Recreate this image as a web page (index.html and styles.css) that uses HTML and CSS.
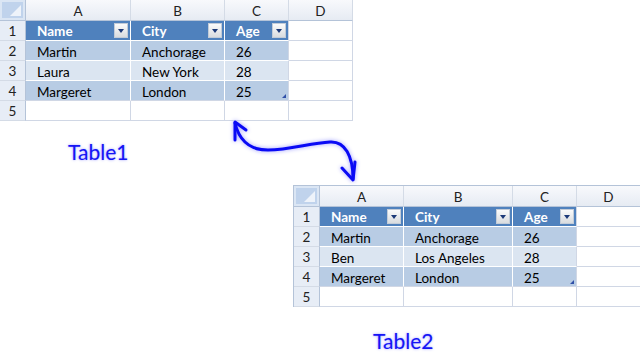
FILE: index.html
```
<!DOCTYPE html>
<html>
<head>
<meta charset="utf-8">
<link rel="stylesheet" href="styles.css">
</head>
<body>
<div class="page">
  <div class="sheet sheet1">
    <div class="corner"></div><div class="colh">A</div><div class="colh">B</div><div class="colh">C</div><div class="colh">D</div>
    <div class="rowh">1</div><div class="th">Name<span class="dd"></span></div><div class="th">City<span class="dd"></span></div><div class="th edge">Age<span class="dd"></span></div><div class="cell"></div>
    <div class="rowh">2</div><div class="td dark">Martin</div><div class="td dark">Anchorage</div><div class="td dark edge">26</div><div class="cell"></div>
    <div class="rowh">3</div><div class="td light">Laura</div><div class="td light">New York</div><div class="td light edge">28</div><div class="cell"></div>
    <div class="rowh">4</div><div class="td dark last">Margeret</div><div class="td dark last">London</div><div class="td dark edge last handle">25</div><div class="cell"></div>
    <div class="rowh">5</div><div class="cell"></div><div class="cell"></div><div class="cell"></div><div class="cell"></div>
  </div>
  <div class="label label1">Table1</div>
  <div class="sheet sheet2">
    <div class="corner"></div><div class="colh">A</div><div class="colh">B</div><div class="colh">C</div><div class="colh">D</div>
    <div class="rowh">1</div><div class="th">Name<span class="dd"></span></div><div class="th">City<span class="dd"></span></div><div class="th edge">Age<span class="dd"></span></div><div class="cell"></div>
    <div class="rowh">2</div><div class="td dark">Martin</div><div class="td dark">Anchorage</div><div class="td dark edge">26</div><div class="cell"></div>
    <div class="rowh">3</div><div class="td light">Ben</div><div class="td light">Los Angeles</div><div class="td light edge">28</div><div class="cell"></div>
    <div class="rowh">4</div><div class="td dark last">Margeret</div><div class="td dark last">London</div><div class="td dark edge last handle">25</div><div class="cell"></div>
    <div class="rowh">5</div><div class="cell"></div><div class="cell"></div><div class="cell"></div><div class="cell"></div>
  </div>
  <div class="label label2">Table2</div>
  <svg class="arrow" width="640" height="359" viewBox="0 0 640 359">
    <g fill="none" stroke="#0a0af5" stroke-width="3" stroke-linecap="round" stroke-linejoin="round">
      <path d="M235,123 C239,140 250,150 268,150 C290,150 310,143 330,142 C345,141 353,156 353,179"/>
      <path d="M235,140 L235,122 L246,130"/>
      <path d="M342,168 L353,180 L355,162"/>
    </g>
  </svg>
</div>
</body>
</html>
```
FILE: styles.css
```
html, body {
  margin: 0;
  padding: 0;
  background: #ffffff;
}

.page {
  position: relative;
  width: 640px;
  height: 359px;
  overflow: hidden;
  font-family: "Lato", "Liberation Sans", sans-serif;
  font-size: 13.5px;
  color: #000;
}

.sheet {
  display: grid;
  grid-template-rows: 21px repeat(5, 20px);
}

.sheet1 {
  grid-template-columns: 26px 105px 94px 64px 64px;
  width: 353px;
}

.sheet2 {
  grid-template-columns: 26px 84px 109px 64px 64px;
  width: 347px;
  margin-left: 293px;
  margin-top: 21px;
  border-top: 1px solid #b4c3d8;
  border-left: 1px solid #b4c3d8;
}

.sheet > div {
  box-sizing: border-box;
  border-right: 1px solid #d0d7e5;
  border-bottom: 1px solid #d0d7e5;
  line-height: 16px;
  padding-top: 2px;
  white-space: nowrap;
  overflow: hidden;
}

.sheet > .corner {
  position: relative;
  background: #c0d3ec;
  box-shadow: inset 0 0 0 2px #dbe6f4;
  border-right: 1px solid #b4c3d8;
  border-bottom: 1px solid #b4c3d8;
}

.corner::after {
  content: "";
  position: absolute;
  right: 4px;
  bottom: 4px;
  width: 11px;
  height: 11px;
  background: #eef3fa;
  clip-path: polygon(100% 0, 100% 100%, 0 100%);
}

.sheet > .colh {
  text-align: center;
  padding-top: 3px;
  color: #222;
  background: linear-gradient(#f8f9fc, #e6ebf3);
  border-right: 1px solid #d4dbe6;
  border-bottom: 1px solid #b4c3d8;
}

.sheet > .rowh {
  text-align: center;
  color: #222;
  background: #e7edf6;
  border-right: 1px solid #b4c3d8;
  border-bottom: 1px solid #d4dbe6;
}

.sheet > .th {
  display: flex;
  align-items: center;
  justify-content: space-between;
  padding: 0 2px 0 11px;
  background: #4f81bd;
  color: #fff;
  font-weight: bold;
  border-right-color: #ffffff;
  border-bottom-color: #ffffff;
}

.dd {
  position: relative;
  width: 14px;
  height: 15px;
  box-sizing: border-box;
  border: 1px solid #c3ccd8;
  background: linear-gradient(#fbfbfb, #d9dcdf);
}

.dd::after {
  content: "";
  position: absolute;
  left: 3px;
  top: 5px;
  border-left: 3px solid transparent;
  border-right: 3px solid transparent;
  border-top: 4px solid #1d3a78;
}

.sheet > .td {
  padding-left: 11px;
  padding-top: 3px;
  border-right-color: #ffffff;
  border-bottom-color: #ffffff;
}

.sheet > .dark {
  background: #b8cce4;
}

.sheet > .light {
  background: #dbe5f1;
}

.sheet > .edge {
  border-right-color: #d0d7e5;
}

.sheet > .last {
  border-bottom-color: #d0d7e5;
}

.sheet > .handle {
  position: relative;
}

.handle::after {
  content: "";
  position: absolute;
  right: 2px;
  bottom: 2px;
  width: 4px;
  height: 4px;
  background: #3050a8;
  clip-path: polygon(100% 0, 100% 100%, 0 100%);
}

.label {
  font-size: 21px;
  line-height: 24px;
  color: #1515f5;
  text-shadow: 0 0 3px #a8a8ff, 0 0 1px #c0c0ff;
}

.label1 {
  margin-top: 19px;
  margin-left: 68px;
}

.label2 {
  margin-top: 22px;
  margin-left: 373px;
}

.arrow {
  position: absolute;
  left: 0;
  top: 0;
  pointer-events: none;
  filter: drop-shadow(0 0 2px #9a9aff);
}
```
